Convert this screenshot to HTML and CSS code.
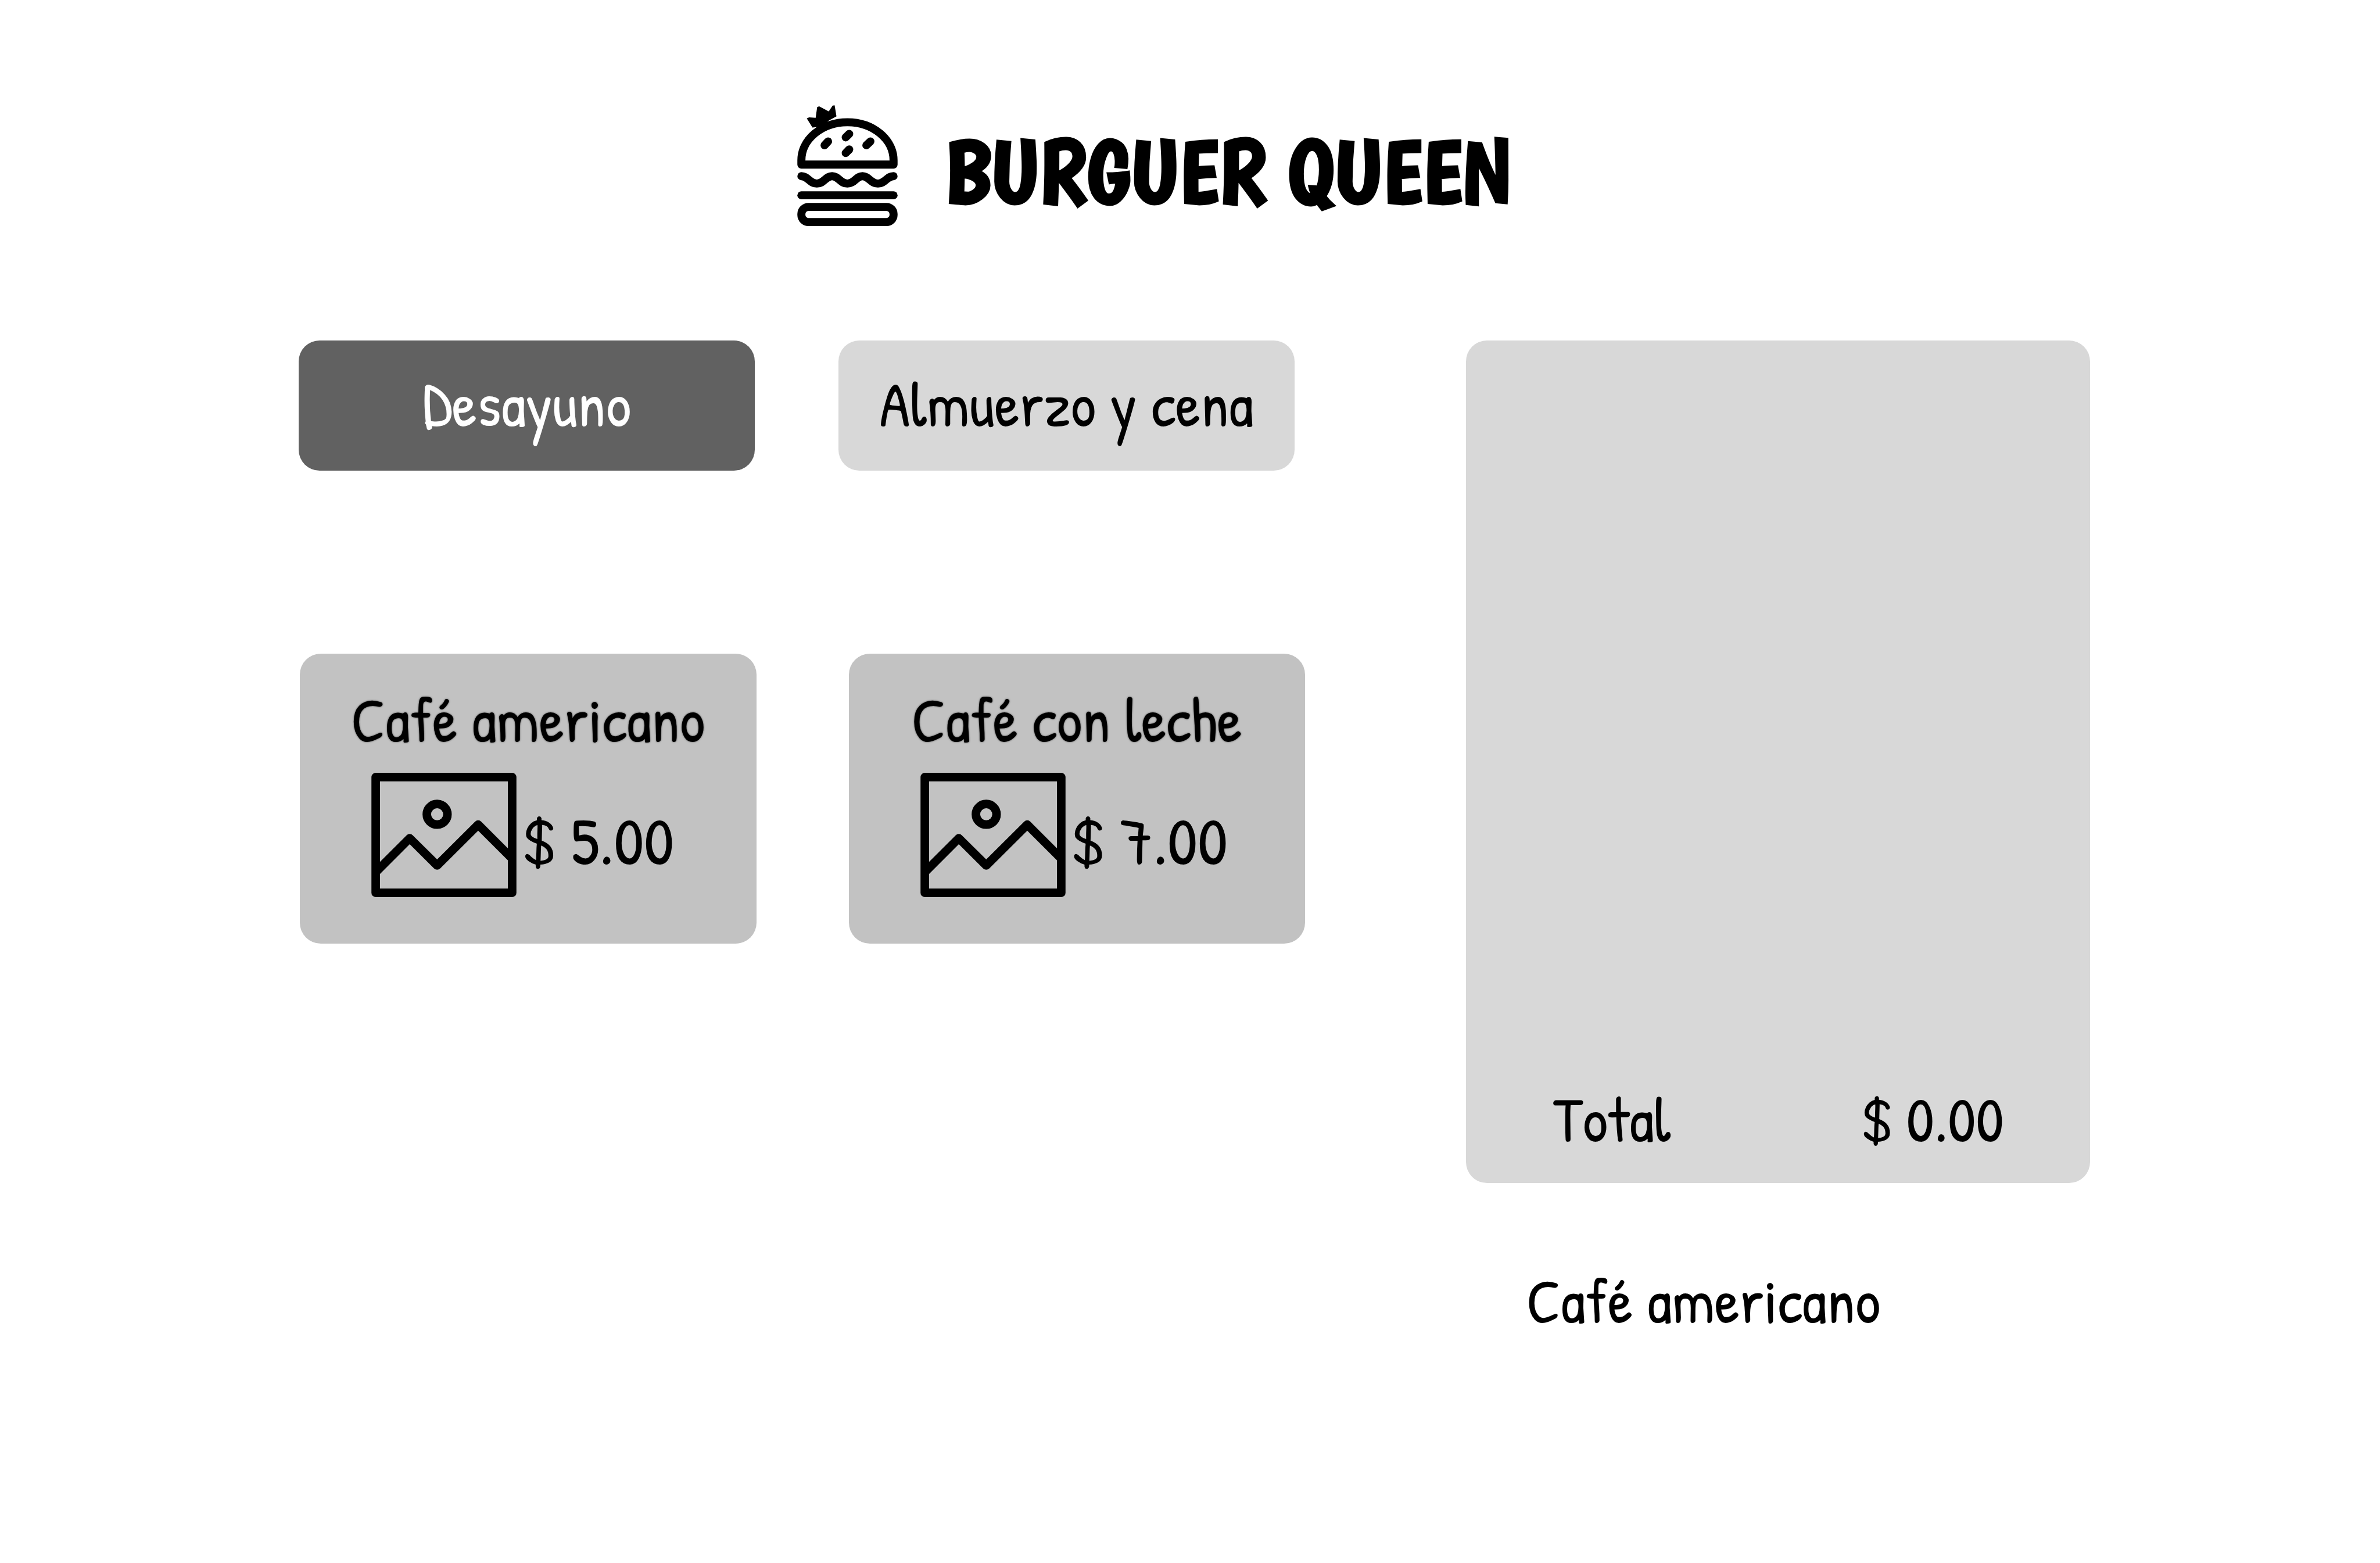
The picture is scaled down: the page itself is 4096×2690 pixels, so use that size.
FILE: index.html
```html
<!DOCTYPE html>
<html lang="es">
<head>
  <meta charset="utf-8">
  <title>Burguer Queen</title>
  <link rel="stylesheet" href="styles.css">
</head>
<body>
  <svg width="0" height="0" class="sprite" aria-hidden="true">
    <symbol id="picture" viewBox="0 0 288 247">
      <g fill="none" stroke="currentColor" stroke-width="17" stroke-linejoin="round">
        <rect x="8.5" y="8.5" width="271" height="230"/>
        <circle cx="130.5" cy="82.5" r="20.5"/>
        <path d="M8 198 76 130l54.500 54L212 103l68 68"/>
      </g>
    </symbol>
  </svg>

  <header class="brand">
    <svg class="brand-icon" viewBox="132 87 597 720" aria-hidden="true">
      <path d="M188 166 202 160 241 162 250 98 262 94 319 124 342 90 354 88 365 154 322 177 270 215 222 220Z"/>
      <g fill="none" stroke="#000" stroke-width="48" stroke-linecap="round" stroke-linejoin="round">
        <path d="M156 441V415A274 226 0 0 1 705 415V441Z"/>
        <path d="M294 326 315 303M420 279 441 258M420 372 441 351M543 326 567 303"/>
        <path d="M156 510C195 510 205 554 248 554S300 510 339 510S387 554 430 554S482 510 520 510S569 554 612 554S664 510 705 510"/>
        <path d="M156 624H705"/>
        <rect x="156" y="693" width="549" height="90" rx="42"/>
      </g>
    </svg>
    <h1 class="brand-name">BURGUER QUEEN</h1>
  </header>

  <main class="layout">
    <section class="menu">
      <nav class="tabs">
        <button class="tab tab-active" type="button">Desayuno</button>
        <button class="tab" type="button">Almuerzo y cena</button>
      </nav>
      <div class="products">
        <button class="product" type="button">
          <span class="product-name">Café americano</span>
          <span class="product-row">
            <svg class="product-picture" aria-hidden="true"><use href="#picture"/></svg>
            <span class="price">$ 5.00</span>
          </span>
        </button>
        <button class="product" type="button">
          <span class="product-name">Café con leche</span>
          <span class="product-row">
            <svg class="product-picture" aria-hidden="true"><use href="#picture"/></svg>
            <span class="price">$ 7.00</span>
          </span>
        </button>
      </div>
    </section>

    <aside class="order">
      <div class="ticket">
        <span>Total</span>
        <span>$ 0.00</span>
      </div>
      <p class="order-item">Café americano</p>
    </aside>
  </main>
</body>
</html>
```

FILE: styles.css
```css
* {
  box-sizing: border-box;
}

body {
  margin: 0;
  background: #fff;
  color: #000;
  font-family: "Patrick Hand", "Liberation Sans", sans-serif;
  font-size: 108px;
  line-height: 120px;
}

button {
  border: 0;
  padding: 0;
  font: inherit;
  color: inherit;
}

.sprite {
  position: absolute;
}

.brand {
  display: flex;
  justify-content: center;
  align-items: center;
  gap: 80px;
  padding: 181px 124px 197px 0;
}

.brand-icon {
  width: 173px;
  height: 208px;
}

.brand-name {
  margin: 0;
  padding-top: 20px;
  font-family: Boogaloo, "Patrick Hand", "Liberation Sans", sans-serif;
  font-size: 154px;
  line-height: 160px;
}

.layout {
  display: grid;
  grid-template-columns: minmax(0, 1732fr) minmax(0, 1074fr);
  gap: 277px;
  padding: 0 499px 0 514px;
}

.tabs {
  display: grid;
  grid-template-columns: 1fr 1fr;
  gap: 144px;
  padding-right: 18px;
}

.tab {
  height: 224px;
  padding-bottom: 6px;
  border-radius: 36px;
  background: #d8d8d8;
  white-space: nowrap;
}

.tab-active {
  background: #616161;
  color: #fff;
}

.products {
  display: grid;
  grid-template-columns: 1fr 1fr;
  gap: 159px;
  margin-top: 315px;
  padding-left: 2px;
}

.product {
  display: flex;
  flex-direction: column;
  gap: 32px;
  padding: 53px 0 80px;
  border-radius: 36px;
  background: #c2c2c2;
}

.product-name {
  align-self: center;
  text-shadow: 0 0 3px rgba(0, 0, 0, 0.6);
}

.product-row {
  display: flex;
  align-items: center;
  gap: 8px;
  padding-left: 123px;
}

.product-picture {
  width: 250px;
  height: 214px;
}

.price {
  padding-top: 18px;
  font-size: 116px;
}

.ticket {
  display: flex;
  justify-content: space-between;
  align-items: flex-end;
  height: 1450px;
  padding: 0 148px 50px 150px;
  border-radius: 36px;
  background: #d8d8d8;
}

.order-item {
  margin: 142px 0 0;
  padding-left: 104px;
}
```
